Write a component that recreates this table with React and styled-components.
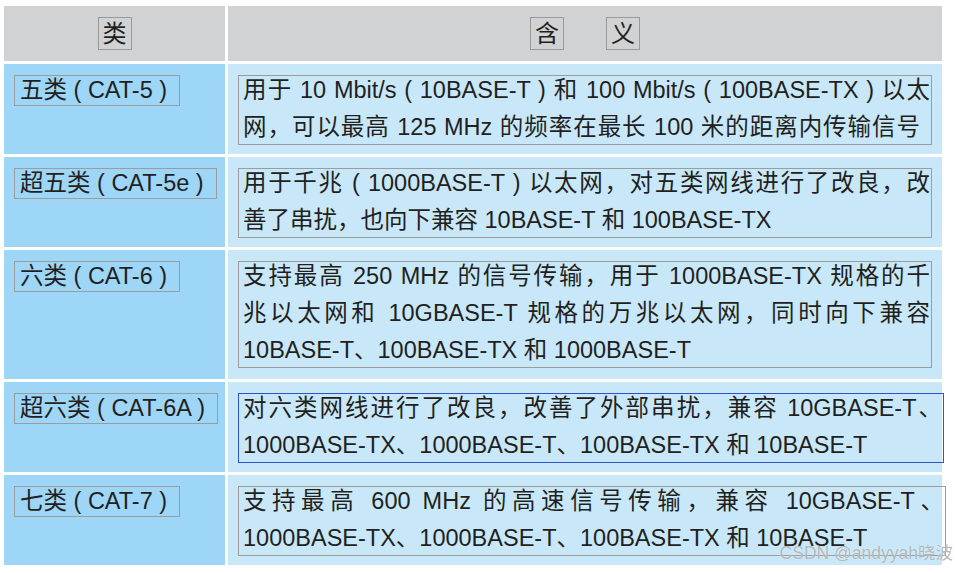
import styled, { createGlobalStyle } from 'styled-components'

const Global = createGlobalStyle`
body {
  margin: 0;
  background: #ffffff;
  font-family: "Liberation Sans", "Noto Sans CJK SC", sans-serif;
  color: #231f20;
}
`

const Page = styled.div`
position: relative;
width: 957px;
height: 573px;
box-sizing: border-box;
padding: 6px 0 0 4px;
overflow: hidden;
`

const Table = styled.div`
display: grid;
grid-template-columns: 221px 714px;
grid-template-rows: 55px 90px 90px 129px 90px 90px;
gap: 3px;
width: 938px;
`

const HeadCell = styled.div`
background: #d1d2d4;
display: flex;
align-items: center;
justify-content: center;
gap: 42px;
`

const HeadBox = styled.span`
border: 1px solid #9a9a9a;
font-size: 24px;
line-height: 31px;
padding: 0 4px;
`

const KindCell = styled.div`
background: #9dd6f7;
padding: 11px 10px;
`

const Label = styled.span`
display: inline-block;
border: 1px solid #9c9c9c;
padding: 0 12px 1px 5px;
font-size: 23.5px;
line-height: 28px;
white-space: nowrap;
`

const DescCell = styled.div`
background: #c8e8f9;
padding: 11px 10px;
`

const DescBox = styled.div`
width: ${p => p.$w}px;
box-sizing: border-box;
border: 1px solid ${p => (p.$active ? '#2b55c5' : '#9c9c9c')};
padding: 0 1px 0 4px;
font-size: 23.5px;
`

const Line = styled.div`
line-height: 28px;
padding-bottom: 9px;
margin-right: ${p => p.$inset || 0}px;
text-align: left;
text-align-last: ${p => (p.$fill ? 'justify' : 'auto')};
&:last-child {
  padding-bottom: 3px;
}
`

const Watermark = styled.div`
position: absolute;
right: 4px;
bottom: 9px;
font-size: 17.5px;
color: rgba(125, 125, 125, 0.55);
text-shadow: 0 0 1px rgba(255, 255, 255, 0.9);
`

const rows = [
  {
    kind: '五类 ( CAT-5 )',
    w: 694,
    lines: [
      { t: '用于 10 Mbit/s ( 10BASE-T ) 和 100 Mbit/s ( 100BASE-TX ) 以太', fill: true },
      { t: '网，可以最高 125 MHz 的频率在最长 100 米的距离内传输信号', fill: true, inset: 10 },
    ],
  },
  {
    kind: '超五类 ( CAT-5e )',
    w: 694,
    lines: [
      { t: '用于千兆 ( 1000BASE-T ) 以太网，对五类网线进行了改良，改', fill: true },
      { t: '善了串扰，也向下兼容 10BASE-T 和 100BASE-TX' },
    ],
  },
  {
    kind: '六类 ( CAT-6 )',
    w: 694,
    lines: [
      { t: '支持最高 250 MHz 的信号传输，用于 1000BASE-TX 规格的千', fill: true },
      { t: '兆以太网和 10GBASE-T 规格的万兆以太网，同时向下兼容', fill: true },
      { t: '10BASE-T、100BASE-TX 和 1000BASE-T' },
    ],
  },
  {
    kind: '超六类 ( CAT-6A )',
    w: 706,
    active: true,
    lines: [
      { t: '对六类网线进行了改良，改善了外部串扰，兼容 10GBASE-T、', fill: true },
      { t: '1000BASE-TX、1000BASE-T、100BASE-TX 和 10BASE-T' },
    ],
  },
  {
    kind: '七类 ( CAT-7 )',
    w: 708,
    lines: [
      { t: '支持最高 600 MHz 的高速信号传输，兼容 10GBASE-T、', fill: true },
      { t: '1000BASE-TX、1000BASE-T、100BASE-TX 和 10BASE-T' },
    ],
  },
]

export default function App() {
  return (
    <Page>
      <Global />
      <Table>
        <HeadCell>
          <HeadBox>类</HeadBox>
        </HeadCell>
        <HeadCell>
          <HeadBox>含</HeadBox>
          <HeadBox>义</HeadBox>
        </HeadCell>
        {rows.map(r => [
          <KindCell key={r.kind + 'k'}>
            <Label>{r.kind}</Label>
          </KindCell>,
          <DescCell key={r.kind + 'd'}>
            <DescBox $w={r.w} $active={r.active}>
              {r.lines.map(l => (
                <Line key={l.t} $fill={l.fill} $inset={l.inset}>{l.t}</Line>
              ))}
            </DescBox>
          </DescCell>,
        ])}
      </Table>
      <Watermark>CSDN @andyyah晓波</Watermark>
    </Page>
  )
}
